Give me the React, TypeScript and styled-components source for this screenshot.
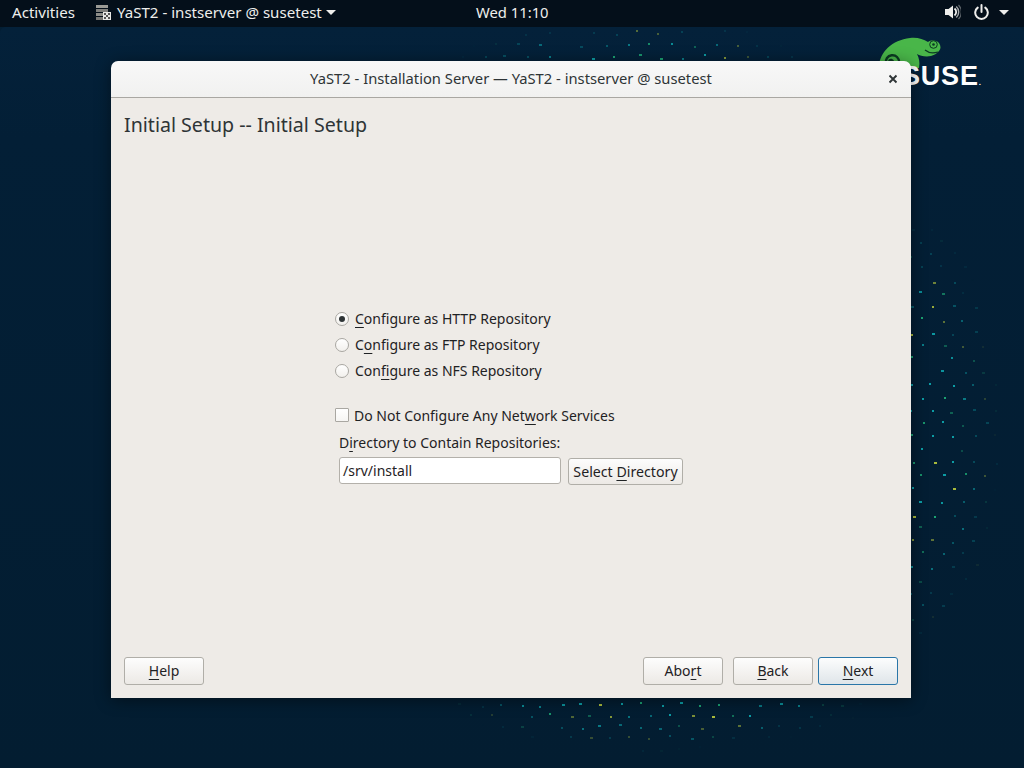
import React from "react";
import styled, { createGlobalStyle } from "styled-components";

const GlobalStyle = createGlobalStyle`
  html, body {
    margin: 0;
    padding: 0;
    width: 1024px;
    height: 768px;
    overflow: hidden;
    background: #031e33;
  }
  * {
    box-sizing: border-box;
  }
`;

const FONT = `"Noto Sans", "Open Sans", sans-serif`;

type Dot = { x: number; y: number; c: string; o: number; w: number };

// seeded so the dot fields stay the same on every render
const makeDots = () => {
  let seed = 4711;
  const rnd = () => {
    seed = (seed * 16807) % 2147483647;
    return seed / 2147483647;
  };
  const dots: Dot[] = [];
  // jittered lattice fading out from the centre of an ellipse
  const field = (cx: number, cy: number, rx: number, ry: number, stepX: number, stepY: number, gain: number) => {
    let row = 0;
    for (let y = cy - ry; y <= cy + ry; y += stepY, row++) {
      for (let x = cx - rx + (row % 2) * (stepX / 2); x <= cx + rx; x += stepX) {
        const r = Math.hypot((x - cx) / rx, (y - cy) / ry);
        if (r > 1 || rnd() < 0.12) continue;
        const kind = rnd();
        dots.push({
          x: Math.round(x + (rnd() - 0.5) * 5),
          y: Math.round(y + (rnd() - 0.5) * 4),
          c: kind < 0.17 ? "#a9ba3c" : kind < 0.4 ? "#1ba272" : "#0c9ca4",
          o: Math.min(1, gain * (1 - r) * (0.45 + rnd() * 0.9)),
          w: rnd() < 0.35 ? 3 : 2,
        });
      }
    }
  };
  field(655, 694, 215, 56, 20, 11, 1.9);
  field(908, 430, 92, 215, 21, 13, 1.9);
  field(630, 62, 180, 42, 22, 12, 1.3);
  return dots;
};

const dots = makeDots();

const DotField = () => (
  <DotSvg width="1024" height="768" viewBox="0 0 1024 768">
    {dots.map((d, i) => (
      <rect key={i} x={d.x} y={d.y} width={d.w} height="2" fill={d.c} opacity={d.o} />
    ))}
  </DotSvg>
);

const AppMenuIcon = () => (
  <svg width="15" height="15" viewBox="0 0 15 15">
    <rect x="0" y="0" width="12" height="3" fill="#9a9a96" />
    <rect x="0" y="4" width="12" height="3" fill="#7f7f7c" />
    <rect x="0" y="8" width="12" height="3" fill="#8c8c88" />
    <rect x="0" y="12" width="7" height="3" fill="#777774" />
    <rect x="7" y="7" width="8" height="8" fill="#e8e8e6" />
    <rect x="8" y="8" width="2" height="2" fill="#555" />
    <rect x="12" y="8" width="2" height="2" fill="#555" />
    <rect x="10" y="10" width="2" height="2" fill="#555" />
    <rect x="8" y="12" width="2" height="2" fill="#555" />
    <rect x="12" y="12" width="2" height="2" fill="#555" />
  </svg>
);

const VolumeIcon = () => (
  <svg width="16" height="16" viewBox="0 0 16 16">
    <path d="M0 5h3.500L8 1.500v13L3.500 11H0z" fill="#eeeeec" />
    <path d="M9.500 4.500a4.500 4.500 0 0 1 0 7" fill="none" stroke="#eeeeec" strokeWidth="1.800" />
    <path d="M11.300 2.500a7.500 7.500 0 0 1 0 11" fill="none" stroke="#eeeeec" strokeWidth="1.400" opacity="0.7" />
    <path d="M13.500 1a10 10 0 0 1 0 14" fill="none" stroke="#eeeeec" strokeWidth="1.200" opacity="0.4" />
  </svg>
);

const PowerIcon = () => (
  <svg width="15" height="16" viewBox="0 0 15 16">
    <path d="M7.500 1v7" fill="none" stroke="#eeeeec" strokeWidth="2" strokeLinecap="round" />
    <path d="M3.700 3.600a6.300 6.300 0 1 0 7.600 0" fill="none" stroke="#eeeeec" strokeWidth="2" strokeLinecap="round" />
  </svg>
);

const Chameleon = () => (
  <svg width="64" height="40" viewBox="0 0 64 40">
    <path
      d="M0 30C1 16 13 4 31 2c7-1 13 1 18 4 3-2 8-2 11 1 2 3 2 6 0 8-2 2-4 4-8 5-5 1-11 0-14-2 2 4 3 8 2 14H0z"
      fill="#49b649"
    />
    <circle cx="54.500" cy="8.500" r="3.800" fill="#49b649" stroke="#0b3a22" strokeWidth="1" />
    <circle cx="54.500" cy="8.500" r="1.300" fill="#0b3a22" />
    <path d="M46 14c3 2.500 8 3.500 13 2" fill="none" stroke="#0b3a22" strokeWidth="1.200" />
    <path
      d="M10 30c-3-1-4-5-2-8 2-3 7-4 10-1 3 3 3 8 1 11M10 28c2 1 4 0 4-2s-3-3-4-1"
      fill="none"
      stroke="#0b3a22"
      strokeWidth="2.400"
    />
  </svg>
);

const App: React.FC = () => {
  return (
    <Screen>
      <GlobalStyle />
      <TopBar>
        <PanelGroup>
          <PanelText>Activities</PanelText>
          <AppMenu>
            <AppMenuIcon />
            <PanelText>YaST2 - instserver @ susetest</PanelText>
            <Caret />
          </AppMenu>
        </PanelGroup>
        <Clock>Wed 11:10</Clock>
        <Tray>
          <VolumeIcon />
          <PowerIcon />
          <TrayCaret />
        </Tray>
      </TopBar>
      <Desktop>
        <DotField />
        <Logo>
          <Chameleon />
          <LogoWord>
            SUSE<LogoDot>.</LogoDot>
          </LogoWord>
        </Logo>
        <Window>
          <TitleBar>
            <TitleText>YaST2 - Installation Server — YaST2 - instserver @ susetest</TitleText>
            <CloseButton>
              <svg width="10" height="10" viewBox="0 0 10 10">
                <path d="M1.500 1.500l7 7M8.500 1.500l-7 7" stroke="#2e3436" strokeWidth="1.900" fill="none" />
              </svg>
            </CloseButton>
          </TitleBar>
          <Body>
            <Heading>Initial Setup -- Initial Setup</Heading>
            <FormArea>
              <RadioGroup>
                <RadioRow>
                  <Radio $checked />
                  <span>
                    <Mnemonic>C</Mnemonic>onfigure as HTTP Repository
                  </span>
                </RadioRow>
                <RadioRow>
                  <Radio />
                  <span>
                    C<Mnemonic>o</Mnemonic>nfigure as FTP Repository
                  </span>
                </RadioRow>
                <RadioRow>
                  <Radio />
                  <span>
                    Con<Mnemonic>f</Mnemonic>igure as NFS Repository
                  </span>
                </RadioRow>
              </RadioGroup>
              <CheckRow>
                <CheckBox />
                <span>
                  Do Not Configure Any Net<Mnemonic>w</Mnemonic>ork Services
                </span>
              </CheckRow>
              <FieldLabel>
                D<Mnemonic>i</Mnemonic>rectory to Contain Repositories:
              </FieldLabel>
              <FieldRow>
                <TextField>/srv/install</TextField>
                <SelectButton>
                  Select <Mnemonic>D</Mnemonic>irectory
                </SelectButton>
              </FieldRow>
            </FormArea>
            <ButtonBar>
              <PushButton>
                <Mnemonic>H</Mnemonic>elp
              </PushButton>
              <RightButtons>
                <AbortButton>
                  Abo<Mnemonic>r</Mnemonic>t
                </AbortButton>
                <PushButton>
                  <Mnemonic>B</Mnemonic>ack
                </PushButton>
                <PushButton $primary>
                  <Mnemonic>N</Mnemonic>ext
                </PushButton>
              </RightButtons>
            </ButtonBar>
          </Body>
        </Window>
      </Desktop>
    </Screen>
  );
};

export default App;

const Screen = styled.div`
  width: 1024px;
  height: 768px;
  display: flex;
  flex-direction: column;
  font-family: ${FONT};
  overflow: hidden;
`;
const TopBar = styled.div`
  position: relative;
  height: 27px;
  flex: none;
  display: flex;
  align-items: center;
  justify-content: space-between;
  padding: 0 15px 3px 12px;
  background: #040f1a;
  color: #eeeeec;
  font-size: 15.1px;
`;
const PanelGroup = styled.div`
  display: flex;
  align-items: center;
  gap: 21px;
`;
const PanelText = styled.span`
  white-space: nowrap;
`;
const AppMenu = styled.div`
  display: flex;
  align-items: center;
  gap: 6px;
`;
const Caret = styled.span`
  width: 0;
  height: 0;
  margin-left: -2px;
  border-left: 5px solid transparent;
  border-right: 5px solid transparent;
  border-top: 5px solid #eeeeec;
`;
const TrayCaret = styled(Caret)`
  margin-left: -3px;
`;
const Clock = styled.span`
  position: absolute;
  left: 476px;
  top: 2px;
  font-size: 14.8px;
`;
const Tray = styled.div`
  display: flex;
  align-items: center;
  gap: 13px;
`;
const Desktop = styled.div`
  position: relative;
  flex: 1;
  padding: 34px 113px 70px 111px;
  border-radius: 6px 6px 0 0;
  background: linear-gradient(180deg, #04213a 0%, #031f36 15%, #031d31 100%);
`;
const DotSvg = styled.svg`
  position: absolute;
  left: 0;
  top: -27px;
`;
const Logo = styled.div`
  position: absolute;
  left: 879px;
  top: 9px;
  width: 110px;
  height: 54px;
`;
const LogoWord = styled.span`
  position: absolute;
  left: 23px;
  top: 24px;
  font-family: "Liberation Sans", sans-serif;
  font-size: 27px;
  line-height: 32px;
  font-weight: 700;
  letter-spacing: 0.8px;
  color: #ffffff;
`;
const LogoDot = styled.span`
  font-size: 8px;
  letter-spacing: 0;
`;
const Window = styled.div`
  position: relative;
  width: 800px;
  height: 637px;
  display: flex;
  flex-direction: column;
  border-radius: 7px 7px 0 0;
  overflow: hidden;
  color: #2e3436;
  box-shadow: 0 2px 16px rgba(0, 0, 0, 0.45);
`;
const TitleBar = styled.div`
  position: relative;
  height: 37px;
  flex: none;
  display: flex;
  align-items: center;
  justify-content: center;
  padding-bottom: 3px;
  background: linear-gradient(180deg, #f8f8f8, #f1f1f0);
  border-bottom: 1px solid #a9a7a2;
`;
const TitleText = styled.span`
  font-size: 14.75px;
  color: #2e3436;
  white-space: nowrap;
`;
const CloseButton = styled.span`
  position: absolute;
  right: 13px;
  top: 13px;
  display: flex;
  width: 10px;
  height: 10px;
`;
const Body = styled.div`
  flex: 1;
  display: flex;
  flex-direction: column;
  padding: 11px 13px 13px;
  background: #eeebe7;
  font-size: 14px;
  color: #1f2224;
`;
const Heading = styled.h1`
  margin: 0;
  height: 33px;
  font-size: 19.6px;
  line-height: 32px;
  font-weight: 400;
  color: #2e3436;
`;
const FormArea = styled.div`
  flex: 1;
  display: flex;
  flex-direction: column;
  padding: 163px 0 0 211px;
`;
const RadioGroup = styled.div`
  display: flex;
  flex-direction: column;
`;
const RadioRow = styled.div`
  display: flex;
  align-items: center;
  gap: 6px;
  height: 26px;
`;
const Radio = styled.span<{ $checked?: boolean }>`
  position: relative;
  width: 14px;
  height: 14px;
  flex: none;
  margin-top: 1px;
  border: 1px solid #a9a7a2;
  border-radius: 50%;
  background: linear-gradient(180deg, #ffffff, #f2f0ed);
  &::after {
    content: "";
    display: ${({ $checked }) => ($checked ? "block" : "none")};
    position: absolute;
    left: 3px;
    top: 3px;
    width: 6px;
    height: 6px;
    border-radius: 50%;
    background: #2e3436;
  }
`;
const CheckRow = styled.div`
  display: flex;
  align-items: center;
  gap: 5px;
  height: 20px;
  margin-top: 22px;
`;
const CheckBox = styled.span`
  width: 14px;
  height: 14px;
  flex: none;
  border: 1px solid #a9a7a2;
  border-radius: 1px;
  background: linear-gradient(180deg, #ffffff, #f6f5f3);
`;
const FieldLabel = styled.div`
  margin: 8px 0 0 4px;
  height: 20px;
  line-height: 20px;
`;
const FieldRow = styled.div`
  display: flex;
  align-items: flex-start;
  gap: 7px;
  margin: 4px 0 0 4px;
`;
const TextField = styled.div`
  width: 222px;
  height: 27px;
  padding: 0 3px;
  line-height: 25px;
  border: 1px solid #b3b0aa;
  border-radius: 3px;
  background: #ffffff;
`;
const ButtonBase = styled.div`
  text-align: center;
  border: 1px solid #b0aea8;
  border-radius: 3px;
  background: linear-gradient(180deg, #fdfdfd, #ece9e5);
  white-space: nowrap;
`;
const SelectButton = styled(ButtonBase)`
  width: 115px;
  height: 27px;
  margin-top: 1px;
  line-height: 25px;
  font-size: 14.2px;
`;
const ButtonBar = styled.div`
  display: flex;
  justify-content: space-between;
`;
const RightButtons = styled.div`
  display: flex;
  gap: 5px;
`;
const PushButton = styled(ButtonBase)<{ $primary?: boolean }>`
  width: 80px;
  height: 28px;
  line-height: 26px;
  ${({ $primary }) =>
    $primary &&
    `
    border-color: #2a76a8;
    background: linear-gradient(180deg, #fcfdfd, #dfe5e9);
  `}
`;
const AbortButton = styled(PushButton)`
  margin-right: 5px;
`;
const Mnemonic = styled.span`
  text-decoration: underline;
  text-decoration-thickness: 1px;
  text-underline-offset: 3px;
`;
